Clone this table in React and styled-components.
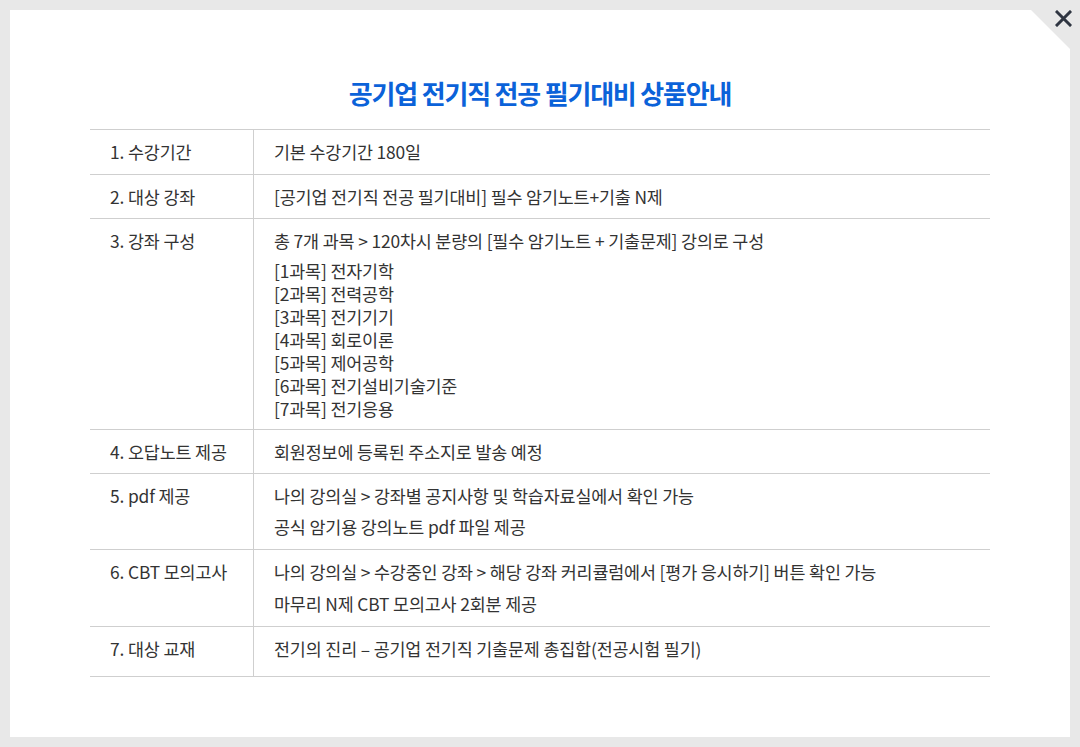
import React from "react";
import styled, { createGlobalStyle } from "styled-components";

const GlobalStyle = createGlobalStyle`
  html, body {
    margin: 0;
    padding: 0;
    background: #e8e8e8;
  }
  body {
    font-family: "Noto Sans CJK KR", "Noto Sans", sans-serif;
    color: #333;
  }
`;

const Page = styled.div`
  width: 1080px;
  height: 747px;
  padding: 10px;
  box-sizing: border-box;
  position: relative;
`;

const Panel = styled.div`
  height: 727px;
  background: #fff;
  clip-path: polygon(0 0, 1021px 0, 100% 39px, 100% 100%, 0 100%);
  padding: 65px 80px 0;
  box-sizing: border-box;
`;

const Close = styled.button`
  position: absolute;
  top: 8px;
  right: 7px;
  width: 20px;
  height: 20px;
  padding: 0;
  border: 0;
  background: none;
  cursor: pointer;
  display: flex;
  align-items: center;
  justify-content: center;
`;

const Title = styled.h2`
  margin: 0 0 18px;
  text-align: center;
  font-size: 26px;
  line-height: 36px;
  font-weight: 700;
  letter-spacing: -1.2px;
  color: #0b62d9;
`;

const Table = styled.div`
  border-top: 1px solid #cfcfcf;
`;

const Row = styled.div`
  display: grid;
  grid-template-columns: 164px 1fr;
  border-bottom: 1px solid #cfcfcf;
`;

const Cell = styled.div`
  padding: 10px 0 ${(p) => p.$bottom || 9.5}px 20px;
  font-size: 17.4px;
  line-height: 24px;
  letter-spacing: -0.15px;
  color: #333;
`;

const Label = styled(Cell)`
  border-right: 1px solid #cfcfcf;
`;

const Lines = styled.div`
  display: flex;
  flex-direction: column;
  gap: ${(p) => p.$gap}px;
`;

const SubList = styled.div`
  display: flex;
  flex-direction: column;
  line-height: 23px;
`;

const rows = [
  { label: "1. 수강기간", lines: ["기본 수강기간 180일"] },
  { label: "2. 대상 강좌", lines: ["[공기업 전기직 전공 필기대비] 필수 암기노트+기출 N제"] },
  {
    label: "3. 강좌 구성",
    lines: ["총 7개 과목 > 120차시 분량의 [필수 암기노트 + 기출문제] 강의로 구성"],
    sub: [
      "[1과목] 전자기학",
      "[2과목] 전력공학",
      "[3과목] 전기기기",
      "[4과목] 회로이론",
      "[5과목] 제어공학",
      "[6과목] 전기설비기술기준",
      "[7과목] 전기응용",
    ],
    gap: 5.5,
  },
  { label: "4. 오답노트 제공", lines: ["회원정보에 등록된 주소지로 발송 예정"], bottom: 8.5 },
  {
    label: "5. pdf 제공",
    lines: [
      "나의 강의실 > 강좌별 공지사항 및 학습자료실에서 확인 가능",
      "공식 암기용 강의노트 pdf 파일 제공",
    ],
    gap: 7.5,
  },
  {
    label: "6. CBT 모의고사",
    lines: [
      "나의 강의실 > 수강중인 강좌 > 해당 강좌 커리큘럼에서 [평가 응시하기] 버튼 확인 가능",
      "마무리 N제 CBT 모의고사 2회분 제공",
    ],
    gap: 8.5,
  },
  {
    label: "7. 대상 교재",
    lines: ["전기의 진리 – 공기업 전기직 기출문제 총집합(전공시험 필기)"],
    bottom: 15,
  },
];

const CloseIcon = () => (
  <svg width="17" height="17" viewBox="0 0 17 17">
    <path
      d="M2 2 L15 15 M15 2 L2 15"
      stroke="#2f3541"
      strokeWidth="3"
      strokeLinecap="square"
      fill="none"
    />
  </svg>
);

const App = () => {
  return (
    <Page>
      <GlobalStyle />
      <Panel>
        <Title>공기업 전기직 전공 필기대비 상품안내</Title>
        <Table>
          {rows.map((r) => (
            <Row key={r.label}>
              <Label $bottom={r.bottom}>{r.label}</Label>
              <Cell $bottom={r.bottom}>
                <Lines $gap={r.gap || 0}>
                  {r.lines.map((l) => (
                    <div key={l}>{l}</div>
                  ))}
                  {r.sub && (
                    <SubList>
                      {r.sub.map((s) => (
                        <div key={s}>{s}</div>
                      ))}
                    </SubList>
                  )}
                </Lines>
              </Cell>
            </Row>
          ))}
        </Table>
      </Panel>
      <Close aria-label="닫기">
        <CloseIcon />
      </Close>
    </Page>
  );
};

export default App;
